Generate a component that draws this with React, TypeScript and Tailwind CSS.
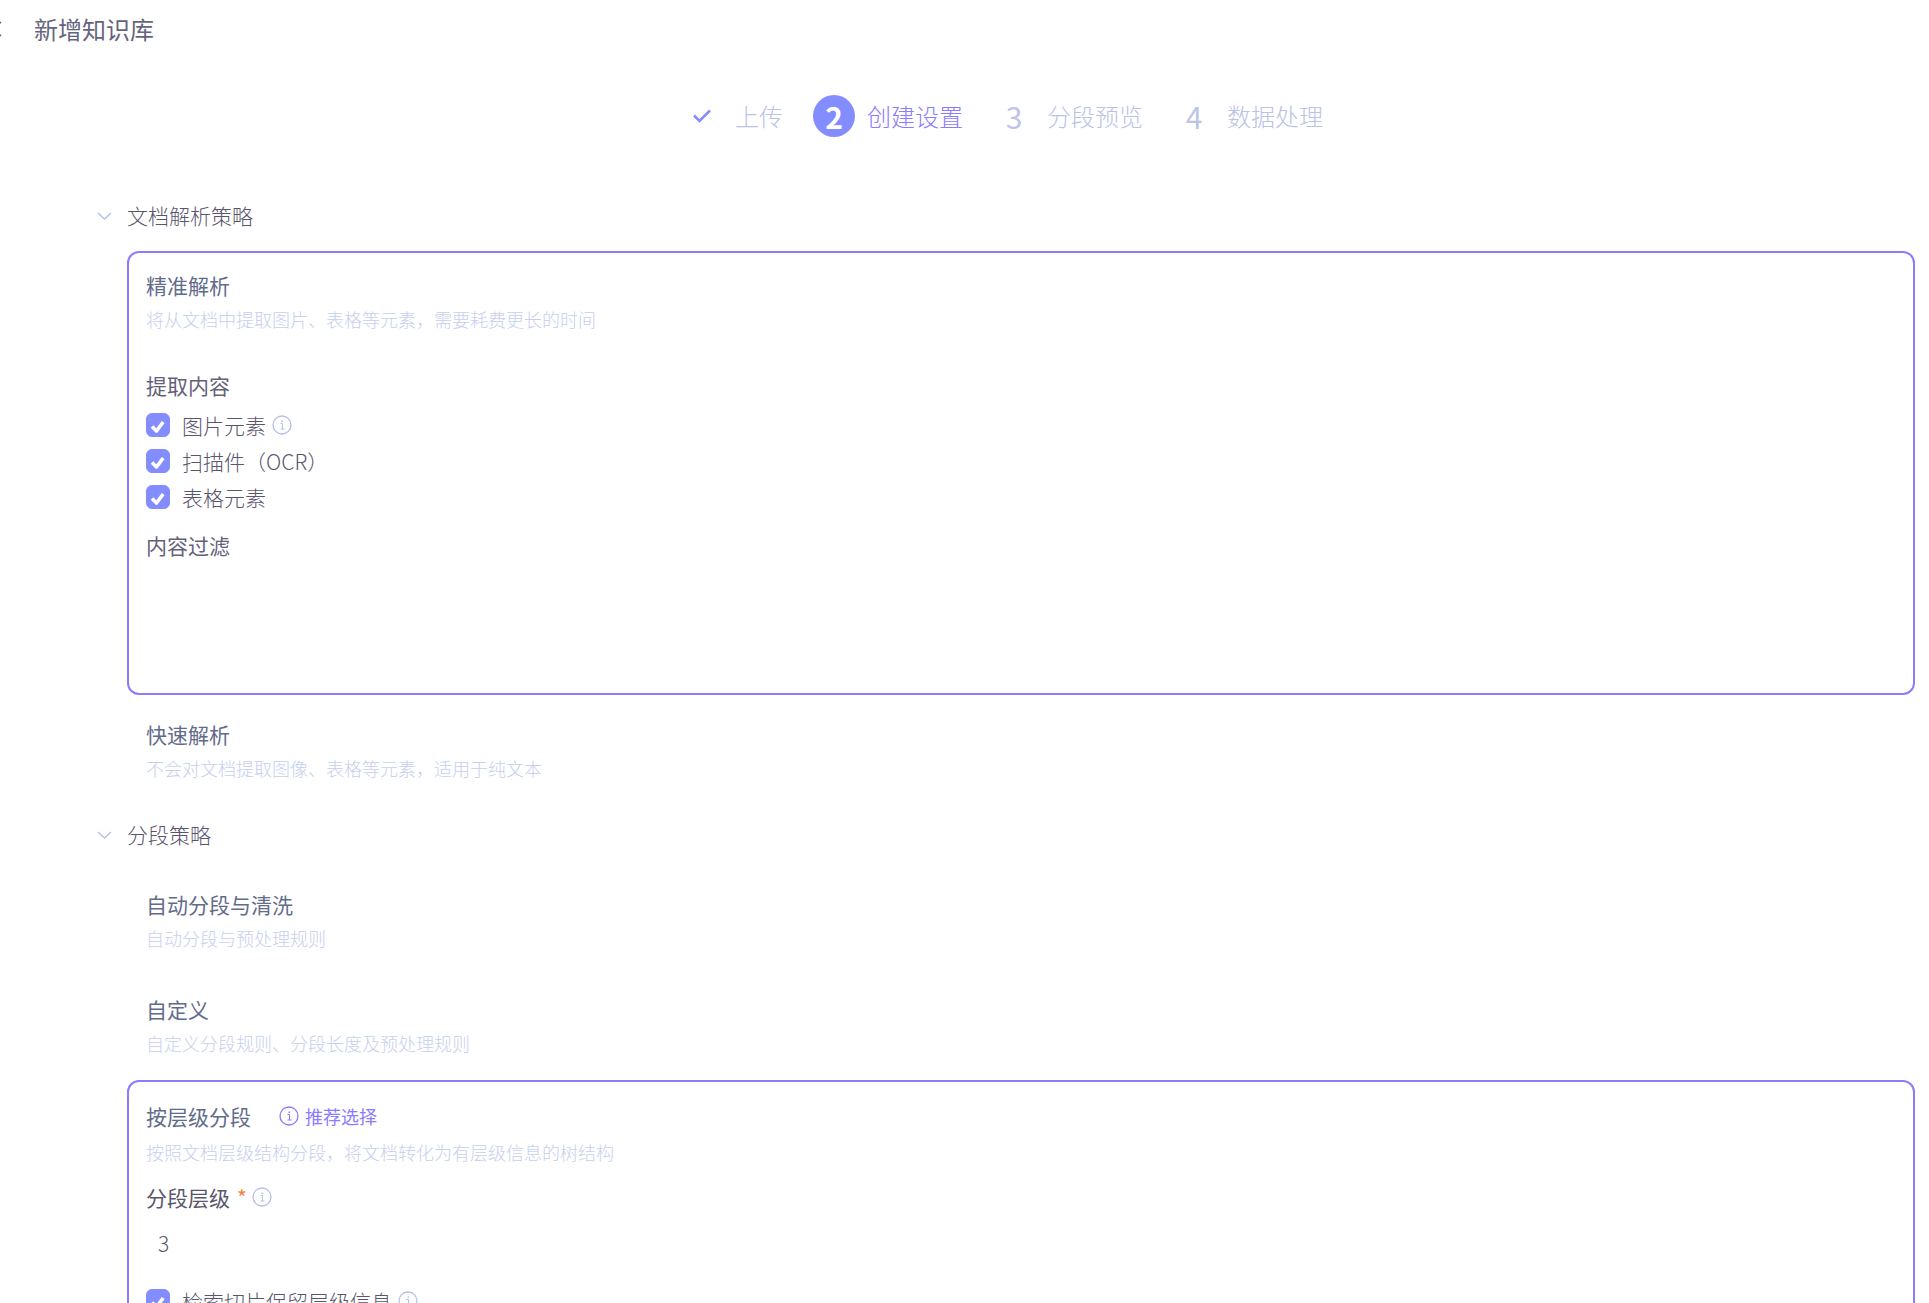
import React, { useState } from 'react';

type Step = { label: string; status: 'done' | 'active' | 'todo' };

const steps: Step[] = [
  { label: '上传', status: 'done' },
  { label: '创建设置', status: 'active' },
  { label: '分段预览', status: 'todo' },
  { label: '数据处理', status: 'todo' },
];

const InfoIcon: React.FC<{ className?: string }> = ({ className = '' }) => (
  <svg viewBox="0 0 20 20" className={`size-5 shrink-0 ${className}`} fill="none" stroke="currentColor" aria-hidden="true">
    <circle cx="10" cy="10" r="9" strokeWidth="1.3" />
    <path d="M8.5 8.5H10.5V14M8.5 14H12.5" strokeWidth="1" />
    <rect x="9.5" y="5.5" width="1.5" height="1.5" fill="currentColor" stroke="none" />
  </svg>
);

const Checkbox: React.FC<{ id: string; label: string; info?: boolean }> = ({ id, label, info }) => {
  const [checked, setChecked] = useState(true);
  return (
    <div className="flex h-9 items-center">
      <span className="relative size-6 shrink-0">
        <input
          id={id}
          type="checkbox"
          checked={checked}
          onChange={e => setChecked(e.target.checked)}
          className="peer block size-6 appearance-none rounded-md border border-[#848dff] checked:bg-[#848dff]"
        />
        <svg viewBox="0 0 24 24" className="pointer-events-none absolute inset-0 hidden size-6 peer-checked:block" fill="none" stroke="#fff" strokeWidth="3.6" aria-hidden="true">
          <path d="M6 13.5L10.5 18L17.2 9" strokeLinejoin="round" />
        </svg>
      </span>
      <label htmlFor={id} className="ml-3 text-[21px] leading-8 font-light text-[#5a556d]">{label}</label>
      {info && <InfoIcon className="ml-[6px] text-[#b3c0e6]" />}
    </div>
  );
};

const StepMarker: React.FC<{ status: Step['status']; index: number }> = ({ status, index }) => {
  if (status === 'done') {
    return (
      <span className="flex size-[42px] items-center justify-center">
        <svg viewBox="0 0 20 20" className="size-5" fill="none" stroke="#848dff" strokeWidth="2.6" aria-hidden="true">
          <path d="M2 9.5L7.5 15L18 4.5" />
        </svg>
      </span>
    );
  }
  if (status === 'active') {
    return (
      <span className="flex size-[42px] items-center justify-center rounded-full bg-[#848dff] text-[30px] leading-none font-bold text-white">
        {index}
      </span>
    );
  }
  return <span className="flex size-[42px] items-center justify-center text-[30px] leading-none text-[#bcc5e6]">{index}</span>;
};

const SectionTitle: React.FC<{ title: string; open: boolean; onToggle: () => void }> = ({ title, open, onToggle }) => (
  <h2>
    <button type="button" aria-expanded={open} onClick={onToggle} className="flex h-9 items-center gap-[10px] text-[21px] font-light text-[#5a556d]">
      <svg viewBox="0 0 26 26" className="size-[26px]" fill="none" stroke="#b3c0e6" strokeWidth="1.4" aria-hidden="true">
        <path d="M7 10L13.5 16L20 10" />
      </svg>
      {title}
    </button>
  </h2>
);

type OptionProps = {
  title: string;
  description: string;
  selected?: boolean;
  badge?: React.ReactNode;
  children?: React.ReactNode;
};

const Option: React.FC<OptionProps> = ({ title, description, selected, badge, children }) => (
  <div className={`rounded-xl border-2 px-[17px] pt-[14px] pb-[18px] ${selected ? 'border-[#8b7bff]' : 'border-transparent'}`}>
    <div className="flex items-center">
      <h3 className="text-[21px] leading-9 text-[#626c8a]">{title}</h3>
      {badge}
    </div>
    <p className="text-lg leading-8 font-light text-[#c6d0ee]">{description}</p>
    {children}
  </div>
);

const App: React.FC = () => {
  const [parseOpen, setParseOpen] = useState(true);
  const [splitOpen, setSplitOpen] = useState(true);
  const [level, setLevel] = useState('3');

  return (
    <div className="h-screen overflow-x-hidden overflow-y-auto bg-white font-['Noto_Sans_CJK_SC',sans-serif] [scrollbar-width:none]" lang="zh-CN">
      <header className="flex h-[58px] items-center">
        <button type="button" aria-label="返回" className="-ml-5 size-6 text-[#65647c]">
          <svg viewBox="0 0 24 24" className="size-6" fill="none" stroke="currentColor" strokeWidth="1.6" aria-hidden="true">
            <path d="M21 5L13 12L21 19" />
          </svg>
        </button>
        <h1 className="ml-[30px] text-2xl text-[#65647c]">新增知识库</h1>
      </header>

      <main className="pr-[14px] pl-[91px]">
        <ol className="mr-[2px] flex h-[116px] items-center justify-center gap-[30px]">
          {steps.map((step, i) => (
            <li key={step.label} className="flex items-center gap-3">
              <StepMarker status={step.status} index={i + 1} />
              <span className={`text-2xl font-light ${step.status === 'active' ? 'text-[#8b7bff]' : 'text-[#b9c3e6]'}`}>{step.label}</span>
            </li>
          ))}
        </ol>

        <section className="mt-6">
          <SectionTitle title="文档解析策略" open={parseOpen} onToggle={() => setParseOpen(!parseOpen)} />
          {parseOpen && (
            <div className="mt-[17px] flex flex-col gap-[5px] pl-9">
              <Option title="精准解析" description="将从文档中提取图片、表格等元素，需要耗费更长的时间" selected>
                <h4 className="mt-8 text-[21px] leading-9 text-[#65607a]">提取内容</h4>
                <div className="mt-1">
                  <Checkbox id="extract-image" label="图片元素" info />
                  <Checkbox id="extract-ocr" label="扫描件（OCR）" />
                  <Checkbox id="extract-table" label="表格元素" />
                </div>
                <div className="mt-3 h-[148px]">
                  <h4 className="text-[21px] leading-9 text-[#65607a]">内容过滤</h4>
                </div>
              </Option>
              <Option title="快速解析" description="不会对文档提取图像、表格等元素，适用于纯文本" />
            </div>
          )}
        </section>

        <section className="mt-[13px]">
          <SectionTitle title="分段策略" open={splitOpen} onToggle={() => setSplitOpen(!splitOpen)} />
          {splitOpen && (
            <div className="mt-[17px] flex flex-col gap-px pl-9">
              <Option title="自动分段与清洗" description="自动分段与预处理规则" />
              <Option title="自定义" description="自定义分段规则、分段长度及预处理规则" />
              <Option
                title="按层级分段"
                description="按照文档层级结构分段，将文档转化为有层级信息的树结构"
                selected
                badge={
                  <span className="ml-7 flex h-10 items-center gap-[6px] text-lg text-[#8b7bff]">
                    <InfoIcon />
                    推荐选择
                  </span>
                }
              >
                <div className="mt-[11px] flex items-center">
                  <label htmlFor="level" className="text-[21px] leading-9 text-[#5a566c]">分段层级</label>
                  <span className="ml-[7px] text-[21px] leading-none text-[#f5803e]">*</span>
                  <InfoIcon className="ml-[5px] text-[#b3c0e6]" />
                </div>
                <input
                  id="level"
                  type="text"
                  value={level}
                  onChange={e => setLevel(e.target.value)}
                  className="mt-2 block h-10 w-full px-3 text-[21px] font-light text-[#5a556d] outline-none"
                />
                <div className="mt-5">
                  <Checkbox id="keep-level" label="检索切片保留层级信息" info />
                </div>
              </Option>
            </div>
          )}
        </section>
      </main>
    </div>
  );
};

export default App;
